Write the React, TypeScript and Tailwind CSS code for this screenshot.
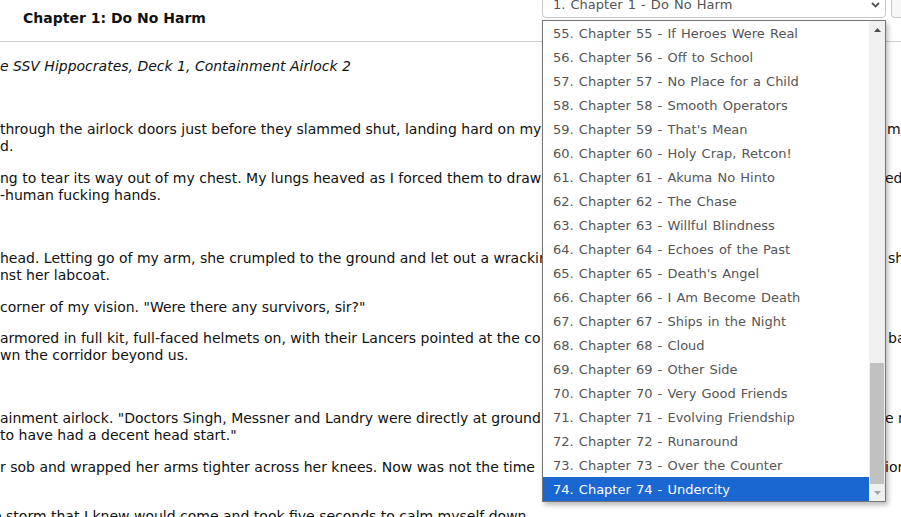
import React from 'react';

const chapters = [
    [55, 'If Heroes Were Real'],
    [56, 'Off to School'],
    [57, 'No Place for a Child'],
    [58, 'Smooth Operators'],
    [59, "That's Mean"],
    [60, 'Holy Crap, Retcon!'],
    [61, 'Akuma No Hinto'],
    [62, 'The Chase'],
    [63, 'Willful Blindness'],
    [64, 'Echoes of the Past'],
    [65, "Death's Angel"],
    [66, 'I Am Become Death'],
    [67, 'Ships in the Night'],
    [68, 'Cloud'],
    [69, 'Other Side'],
    [70, 'Very Good Friends'],
    [71, 'Evolving Friendship'],
    [72, 'Runaround'],
    [73, 'Over the Counter'],
    [74, 'Undercity'],
] as const;

type LineProps = {
    text: string;
    tail?: string;
    tailPad?: string;
};

// one visible line of the page, scrolled sideways: the middle runs under the open dropdown
function Line({ text, tail, tailPad = 'pl-[1px]' }: LineProps) {
    return (
        <div className="flex h-[17px]">
            <div className="w-[542px] shrink-0 overflow-hidden whitespace-nowrap">{text}</div>
            <div className="flex-1" />
            <div className={`w-[16px] shrink-0 overflow-hidden whitespace-nowrap ${tailPad}`}>{tail}</div>
        </div>
    );
}

function ChapterDropdown() {
    return (
        <div className="absolute left-0 top-[30px] z-10 flex h-[482px] w-full border border-[#767676] bg-white shadow-[2px_3px_5px_rgba(0,0,0,0.28)]">
            <ul className="flex-1">
                {chapters.map(([num, title]) => {
                    const selected = num === 74;
                    return (
                        <li
                            key={num}
                            className={`h-[24px] pl-[10px] pt-[1px] leading-[23px] whitespace-nowrap ${
                                selected ? 'bg-[#1a67d2] text-white' : 'text-[#555]'
                            }`}
                        >
                            {num}. Chapter {num} - {title}
                        </li>
                    );
                })}
            </ul>
            <div className="flex w-[16px] flex-col bg-[#f0f0f0]">
                <div className="flex h-[17px] items-center justify-center">
                    <svg width="7" height="4" viewBox="0 0 7 4">
                        <path d="M3.5 0 L7 4 L0 4 Z" fill="#505050" />
                    </svg>
                </div>
                <div className="flex flex-1 flex-col justify-end px-[1px]">
                    <div className="h-[121px] bg-[#c1c1c1]" />
                </div>
                <div className="flex h-[17px] items-center justify-center">
                    <svg width="7" height="4" viewBox="0 0 7 4">
                        <path d="M0 0 L7 0 L3.5 4 Z" fill="#a3a3a3" />
                    </svg>
                </div>
            </div>
        </div>
    );
}

export default function App() {
    return (
        <div
            className="h-screen w-full overflow-hidden bg-white text-[14px] text-[#111]"
            style={{ fontFamily: '"DejaVu Sans", Verdana, sans-serif' }}
        >
            <header className="flex h-[42px] items-start border-b border-[#cfcfcf]">
                <h1 className="w-[542px] shrink-0 pl-[23px] pt-[10px] text-[14px] font-bold leading-[17px]">
                    Chapter 1: Do No Harm
                </h1>
                <div className="relative -mt-[10px] w-[344px] shrink-0 text-[13px] [word-spacing:1px]">
                    <div className="flex h-[28px] items-center justify-between rounded-[4px] border border-[#c8c8c8] bg-white pl-[10px] pr-[5px] pt-[1px] text-[#555]">
                        <span>1. Chapter 1 - Do No Harm</span>
                        <svg width="9" height="6" viewBox="0 0 9 6">
                            <path d="M1 1 L4.5 4.5 L8 1" fill="none" stroke="#555" strokeWidth="1.8" />
                        </svg>
                    </div>
                    <ChapterDropdown />
                </div>
                <div className="-mt-[10px] ml-[5px] h-[28px] flex-1 rounded-l-[4px] border border-r-0 border-[#c8c8c8] bg-[#f7f7f7]" />
            </header>

            <main className="pt-[1.5px] leading-[17px] [&>p]:my-[14.6px]">
                <p className="italic">
                    <Line text="e SSV Hippocrates, Deck 1, Containment Airlock 2" />
                </p>
                <p>
                    <Line text={'\u00a0'} />
                </p>
                <p>
                    <Line
                        text="through the airlock doors just before they slammed shut, landing hard on my"
                        tail="m"
                        tailPad="pl-[2px]"
                    />
                    <Line text="d." />
                </p>
                <p>
                    <Line
                        text="ng to tear its way out of my chest. My lungs heaved as I forced them to draw"
                        tail="ed"
                        tailPad="pl-[0px]"
                    />
                    <Line text="-human fucking hands." />
                </p>
                <p>
                    <Line text={'\u00a0'} />
                </p>
                <p>
                    <Line
                        text="head. Letting go of my arm, she crumpled to the ground and let out a wracking"
                        tail="sh"
                        tailPad="pl-[3px]"
                    />
                    <Line text="nst her labcoat." />
                </p>
                <p>
                    <Line text={'corner of my vision. "Were there any survivors, sir?"'} />
                </p>
                <p>
                    <Line
                        text="armored in full kit, full-faced helmets on, with their Lancers pointed at the co"
                        tail="ba"
                        tailPad="pl-[3px]"
                    />
                    <Line text="wn the corridor beyond us." />
                </p>
                <p>
                    <Line text={'\u00a0'} />
                </p>
                <p>
                    <Line
                        text={'ainment airlock. "Doctors Singh, Messner and Landry were directly at ground'}
                        tail="e r"
                        tailPad="pl-[0px]"
                    />
                    <Line text={'to have had a decent head start."'} />
                </p>
                <p>
                    <Line
                        text="r sob and wrapped her arms tighter across her knees. Now was not the time"
                        tail="ior"
                        tailPad="pl-[0px]"
                    />
                    <Line text={'\u00a0'} />
                </p>
                <p>
                    <div className="flex h-[17px]">
                        <div className="flex-1 overflow-hidden whitespace-nowrap">
                            <span className="-ml-[7px]">e storm that I knew would come and took five seconds to calm myself down.</span>
                        </div>
                    </div>
                </p>
            </main>
        </div>
    );
}
